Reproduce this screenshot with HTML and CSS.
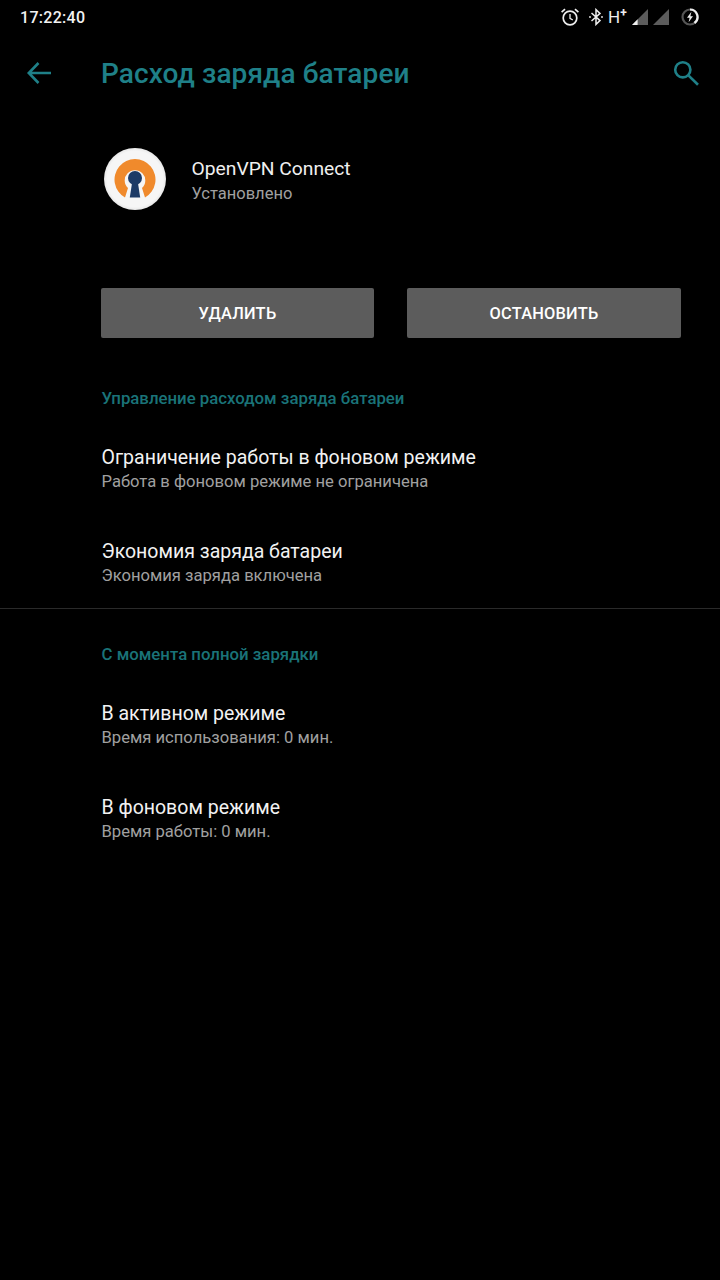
FILE: index.html
```html
<!doctype html>
<html lang="ru">
<head>
  <meta charset="utf-8">
  <meta name="viewport" content="width=device-width,initial-scale=1">
  <title>Расход заряда батареи</title>
  <link rel="stylesheet" href="styles.css">
</head>
<body>
  <div class="status-bar">
    <span class="clock">17:22:40</span>
    <div class="status-icons">
      <svg class="ic-alarm" width="20" height="20" viewBox="0 0 20 20" fill="none" stroke="#eee" stroke-width="1.7">
        <circle cx="10" cy="11" r="6.800"/>
        <path d="M10 7v4.300l2.800 1.700" stroke-width="1.3"/>
        <path d="M1.600 5.200 5 2.200M18.400 5.200 15 2.200"/>
      </svg>
      <svg class="ic-bt" width="14" height="18" viewBox="0 0 14 18" fill="none" stroke="#eee" stroke-width="1.5">
        <path d="M2.500 5 11 12.600 7 16.400V1.600l4 3.800L2.500 13"/>
        <circle cx="1" cy="9" r=".9" fill="#eee" stroke="none"/>
        <circle cx="13" cy="9" r=".9" fill="#eee" stroke="none"/>
      </svg>
      <span class="net">H<sup>+</sup></span>
      <svg class="ic-sig" width="16" height="16" viewBox="0 0 17 17">
        <path d="M17 0v17H0z" fill="#5c5c5c"/>
        <path d="M6 11v6H0z" fill="#eee"/>
      </svg>
      <svg class="ic-sig2" width="16" height="16" viewBox="0 0 17 17">
        <path d="M17 0v17H0z" fill="#5c5c5c"/>
      </svg>
      <svg class="ic-batt" width="18" height="18" viewBox="0 0 18 18" fill="none">
        <circle cx="9" cy="9" r="7.500" stroke="#555" stroke-width="2.2"/>
        <path d="M9 1.500A7.500 7.500 0 0 1 13.500 15" stroke="#eee" stroke-width="2.2"/>
        <path d="M10.400 3.800 6 9.800h2.600l-1 4.400L12 8.200H9.400z" fill="#eee"/>
      </svg>
    </div>
  </div>

  <header class="toolbar">
    <svg class="back" width="26" height="24" viewBox="0 0 26 24" fill="none" stroke="#1f8088" stroke-width="2.6">
      <path d="M25 12H3M12.500 2 2.800 12l9.700 10"/>
    </svg>
    <h1 class="title">Расход заряда батареи</h1>
    <svg class="search" width="28" height="28" viewBox="0 0 28 28" fill="none" stroke="#1f8088" stroke-width="2.6">
      <circle cx="10.800" cy="10.800" r="7.600"/>
      <path d="m16.400 16.400 9.600 9.400"/>
    </svg>
  </header>

  <section class="app-head">
    <div class="app-logo">
      <svg width="62" height="62" viewBox="0 0 62 62">
        <defs>
          <radialGradient id="disc">
            <stop offset=".9" stop-color="#f6f6f6"/>
            <stop offset="1" stop-color="#e8e8e8"/>
          </radialGradient>
        </defs>
        <circle cx="31" cy="31" r="31" fill="url(#disc)"/>
        <path d="M21 49.500a20.500 20.500 0 1 1 20 0l-3-9.500a10.300 10.300 0 1 0-14 0z" fill="#f08a2c"/>
        <circle cx="31" cy="30" r="7" fill="#1d3b66"/>
        <path d="M28.500 32h5l2.700 17.500H25.800z" fill="#1d3b66"/>
      </svg>
    </div>
    <div class="app-info">
      <div class="app-name">OpenVPN Connect</div>
      <div class="app-state">Установлено</div>
    </div>
  </section>

  <div class="actions">
    <button class="btn">УДАЛИТЬ</button>
    <button class="btn">ОСТАНОВИТЬ</button>
  </div>

  <section class="group">
    <h2 class="group-title">Управление расходом заряда батареи</h2>
    <div class="row">
      <div class="row-title">Ограничение работы в фоновом режиме</div>
      <div class="row-sub">Работа в фоновом режиме не ограничена</div>
    </div>
    <div class="row">
      <div class="row-title">Экономия заряда батареи</div>
      <div class="row-sub">Экономия заряда включена</div>
    </div>
  </section>

  <section class="group second">
    <h2 class="group-title">С момента полной зарядки</h2>
    <div class="row">
      <div class="row-title">В активном режиме</div>
      <div class="row-sub">Время использования: 0 мин.</div>
    </div>
    <div class="row">
      <div class="row-title">В фоновом режиме</div>
      <div class="row-sub">Время работы: 0 мин.</div>
    </div>
  </section>
</body>
</html>
```

FILE: styles.css
```css
*{box-sizing:border-box}
html,body{margin:0;height:100%;background:#000;color:#fff;font-family:Roboto,"Noto Sans",sans-serif}

.status-bar{height:36px;display:flex;align-items:center;justify-content:space-between;padding:0 20px 2px 20px}
.clock{font-size:16px;font-weight:500;color:#f2f2f2;letter-spacing:.3px}
.status-icons{display:flex;align-items:center}
.ic-bt{margin-left:9px}
.net{font-size:17px;color:#eee;margin-left:5px;line-height:18px;width:20px}
.net sup{font-size:12px;font-weight:700;line-height:0;vertical-align:6px}
.ic-sig{margin-left:4px}
.ic-sig2{margin-left:5px}
.ic-batt{margin-left:12px;margin-right:1px}

.toolbar{height:76px;display:flex;align-items:center;padding:0 20px 2px 26px}
.back{flex:none}
.title{margin:0 0 0 49px;flex:1;font-size:28px;font-weight:500;color:#1f8088;letter-spacing:.1px}
.search{flex:none}

.app-head{display:flex;align-items:center;padding:0 0 0 104px;margin-top:36px;height:62px}
.app-logo{width:62px;height:62px}
.app-info{margin-left:25.500px;padding-top:4px}
.app-name{font-size:19.250px;line-height:24px;color:#f0f0f0}
.app-state{font-size:16.500px;line-height:24px;margin-top:1px;color:#a0a0a0}

.actions{display:flex;justify-content:space-between;padding:0 39px 0 101px;margin-top:78px}
.btn{width:273px;height:50px;border:0;border-radius:2px;background:#5c5c5c;color:#fff;font:500 16.400px Roboto,sans-serif;letter-spacing:.2px}
.btn + .btn{width:274px}

.group{margin-top:50px;border-bottom:1px solid #2a2a2a}
.second{margin-top:35px;border-bottom:0}
.group-title{margin:0 0 12px;padding-left:101.500px;font-size:16.800px;line-height:20px;font-weight:500;color:#1a7378}

.row{height:94px;padding:26px 0 0 101.500px}
.row-title{font-size:19.500px;line-height:24px;color:#f2f2f2}
.row-sub{font-size:16.600px;line-height:24px;color:#a0a0a0}
```
